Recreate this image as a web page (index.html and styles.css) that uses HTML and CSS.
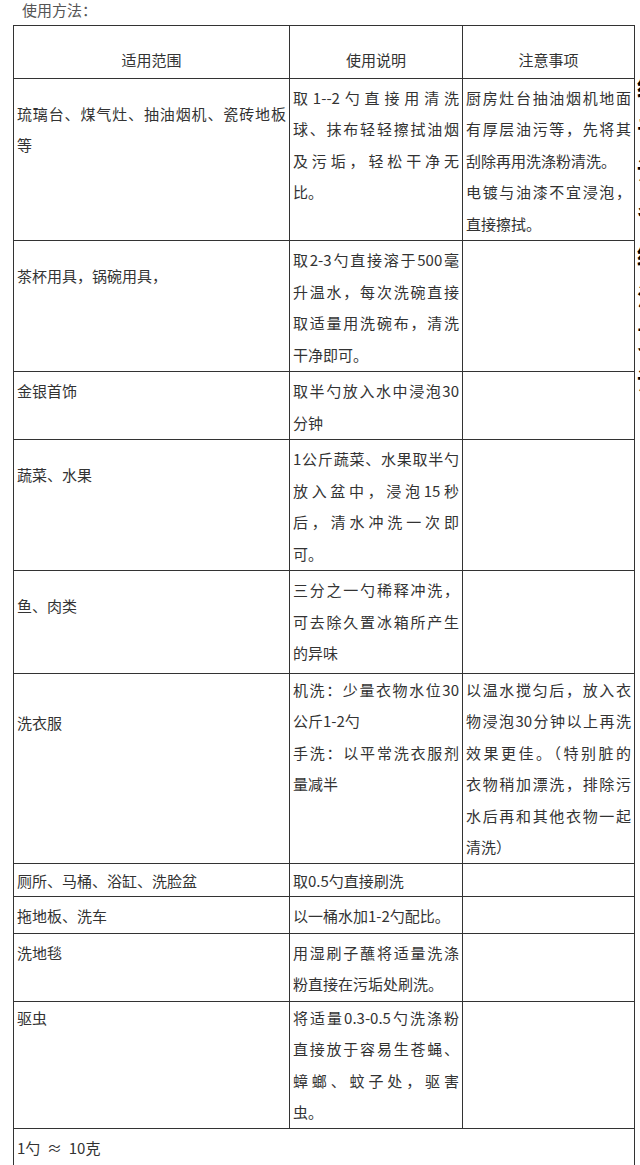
FILE: index.html
```html
<!DOCTYPE html>
<html lang="zh-CN">
<head>
<meta charset="utf-8">
<title>使用方法</title>
<link rel="stylesheet" href="styles.css">
</head>
<body>
<div class="page">
  <div class="title">使用方法：</div>
  <div class="main">
    <table class="usage">
      <colgroup>
        <col class="c1"><col class="c2"><col class="c3">
      </colgroup>
      <thead>
        <tr>
          <th>适用范围</th>
          <th>使用说明</th>
          <th>注意事项</th>
        </tr>
      </thead>
      <tbody>
        <tr>
          <td class="off1"><span class="ln j">琉璃台、煤气灶、抽油烟机、瓷砖地板</span><span class="ln">等</span></td>
          <td><span class="ln j">取1--2勺直接用清洗</span><span class="ln j">球、抹布轻轻擦拭油烟</span><span class="ln j">及污垢，轻松干净无</span><span class="ln">比。</span></td>
          <td><span class="ln j">厨房灶台抽油烟机地面</span><span class="ln j">有厚层油污等，先将其</span><span class="ln">刮除再用洗涤粉清洗。</span><span class="ln j">电镀与油漆不宜浸泡，</span><span class="ln">直接擦拭。</span></td>
        </tr>
        <tr>
          <td class="off1"><span class="ln">茶杯用具，锅碗用具，</span></td>
          <td><span class="ln j">取2-3勺直接溶于500毫</span><span class="ln j">升温水，每次洗碗直接</span><span class="ln j">取适量用洗碗布，清洗</span><span class="ln">干净即可。</span></td>
          <td></td>
        </tr>
        <tr>
          <td><span class="ln">金银首饰</span></td>
          <td><span class="ln j">取半勺放入水中浸泡30</span><span class="ln">分钟</span></td>
          <td></td>
        </tr>
        <tr>
          <td class="off1"><span class="ln">蔬菜、水果</span></td>
          <td><span class="ln j">1公斤蔬菜、水果取半勺</span><span class="ln j">放入盆中，浸泡15秒</span><span class="ln j">后，清水冲洗一次即</span><span class="ln">可。</span></td>
          <td></td>
        </tr>
        <tr class="roomy">
          <td class="off1"><span class="ln">鱼、肉类</span></td>
          <td><span class="ln j">三分之一勺稀释冲洗，</span><span class="ln j">可去除久置冰箱所产生</span><span class="ln">的异味</span></td>
          <td></td>
        </tr>
        <tr class="snug">
          <td class="off2"><span class="ln">洗衣服</span></td>
          <td><span class="ln j">机洗：少量衣物水位30</span><span class="ln">公斤1-2勺</span><span class="ln j">手洗：以平常洗衣服剂</span><span class="ln">量减半</span></td>
          <td><span class="ln j">以温水搅匀后，放入衣</span><span class="ln j">物浸泡30分钟以上再洗</span><span class="ln j">效果更佳。（特别脏的</span><span class="ln j">衣物稍加漂洗，排除污</span><span class="ln j">水后再和其他衣物一起</span><span class="ln">清洗）</span></td>
        </tr>
        <tr class="tight">
          <td><span class="ln">厕所、马桶、浴缸、洗脸盆</span></td>
          <td><span class="ln">取0.5勺直接刷洗</span></td>
          <td></td>
        </tr>
        <tr>
          <td><span class="ln">拖地板、洗车</span></td>
          <td><span class="ln">以一桶水加1-2勺配比。</span></td>
          <td></td>
        </tr>
        <tr>
          <td><span class="ln">洗地毯</span></td>
          <td><span class="ln j">用湿刷子蘸将适量洗涤</span><span class="ln">粉直接在污垢处刷洗。</span></td>
          <td></td>
        </tr>
        <tr class="snug">
          <td><span class="ln">驱虫</span></td>
          <td><span class="ln j">将适量0.3-0.5勺洗涤粉</span><span class="ln j">直接放于容易生苍蝇、</span><span class="ln j">蟑螂、蚊子处，驱害</span><span class="ln">虫。</span></td>
          <td></td>
        </tr>
        <tr class="foot">
          <td colspan="3"><span class="ln">1勺 &nbsp;≈ &nbsp;10克</span></td>
        </tr>
      </tbody>
    </table>
    <div class="aside">
      <span>经</span><span>于</span><span>调</span><span>冬</span><span>终</span><span>江</span><span>更</span><span>识</span>
    </div>
  </div>
</div>
</body>
</html>
```
FILE: styles.css
```css
html, body {
  margin: 0;
  padding: 0;
  background: #ffffff;
}
body {
  width: 640px;
  overflow: hidden;
  font-family: "Noto Sans CJK SC", "Noto Sans", "Liberation Sans", sans-serif;
  color: #333333;
}
.page {
  width: 640px;
  height: 1165px;
  overflow: hidden;
}
.title {
  height: 24px;
  padding-top: 1px;
  line-height: 17px;
  padding-left: 22px;
  font-size: 15px;
  color: #555555;
}
.main {
  display: flex;
  align-items: flex-start;
}
.usage {
  margin-left: 13px;
  width: 621px;
  flex: 0 0 621px;
  table-layout: fixed;
  border-collapse: collapse;
  font-size: 15px;
  line-height: 31.5px;
}
.c1 { width: 276px; }
.c2 { width: 173px; }
.c3 { width: 172px; }
.usage th,
.usage td {
  border: 1.5px solid #333333;
  vertical-align: top;
  text-align: left;
  padding: 3px 3px 1px 3px;
  font-weight: normal;
  overflow: visible;
}
.usage th {
  text-align: center;
  padding: 18px 3px 2px;
}
.ln {
  display: block;
  white-space: nowrap;
}
.ln.j {
  text-align: justify;
  text-align-last: justify;
}
.usage td.off1 {
  padding-top: 19px;
}
.roomy td {
  padding-bottom: 4px;
}
.snug td {
  padding-top: 0;
  padding-bottom: 0;
}
.snug td.off2 {
  padding-top: 33px;
}
.tight td {
  padding-top: 1px;
  padding-bottom: 0;
}
.foot td {
  padding-top: 3px;
  padding-bottom: 40px;
}
.aside {
  flex: 0 0 40px;
  margin-left: 2px;
  padding-top: 40px;
  display: flex;
  flex-direction: column;
  font-size: 24px;
  line-height: 42px;
  font-weight: bold;
  color: #000000;
}
```
